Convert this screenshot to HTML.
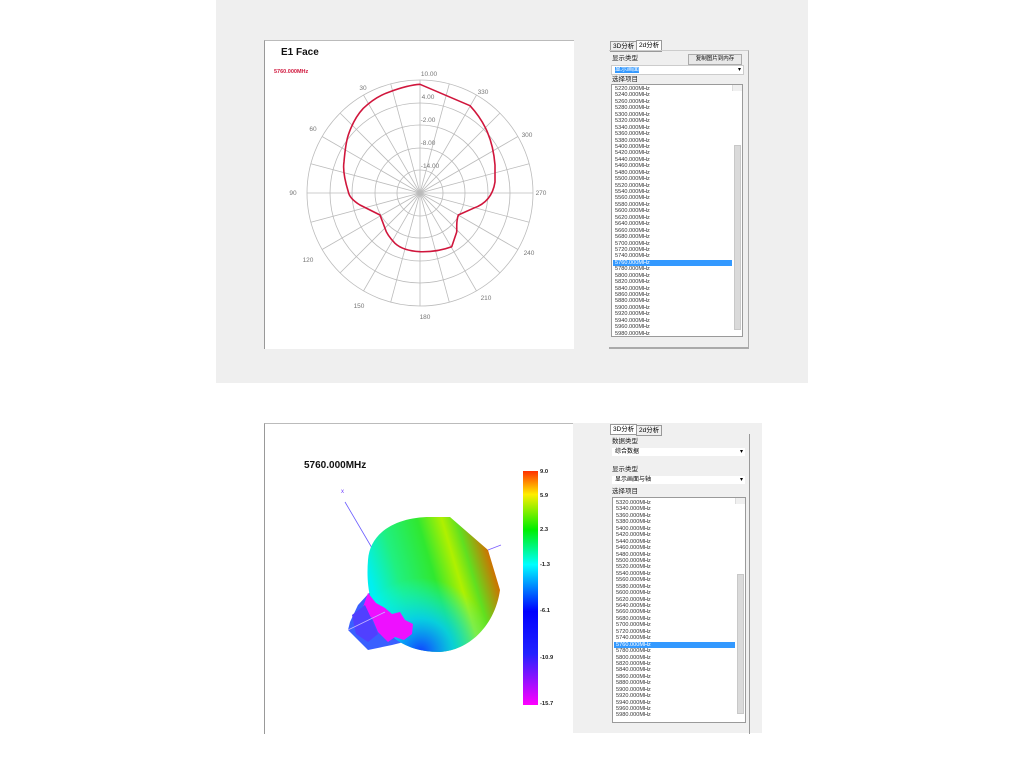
<!DOCTYPE html>
<html><head><meta charset="utf-8"><style>
body{margin:0;width:1024px;height:768px;background:#fff;position:relative;overflow:hidden;font-family:"Liberation Sans","Noto Sans CJK SC",sans-serif}
.a{position:absolute}
.list{position:absolute;background:#fff;border:1px solid #9a9a9a;font-size:5.6px;line-height:6.45px;color:#333;padding-left:3px;box-sizing:border-box;overflow:hidden}
.list div{height:6.45px;white-space:nowrap}
.sel{background:#3399ff;color:#fff;margin-left:-2px;padding-left:2px;margin-right:10px}
.sb{position:absolute;right:0;top:0;bottom:0;width:9px;background:#f0f0f0;border-left:1px solid #ddd}
.thumb{position:absolute;right:1px;width:7px;background:#dadada;border:1px solid #c8c8c8;box-sizing:border-box}
.lbl{font-size:6.5px;line-height:7px;color:#222;position:absolute}
.tab{position:absolute;font-size:6.5px;line-height:9px;border:1px solid #999;background:#fff;padding:0 2px;height:9px}
.combo{position:absolute;background:#fff;border:1px solid #ccc;font-size:6px;height:8px;line-height:8px;padding-left:3px;box-sizing:content-box}
.combo:after{content:"▾";position:absolute;right:2px;top:0;font-size:6px}
</style></head><body>
<div class="a" style="left:216px;top:0;width:592px;height:383px;background:#efefef"></div>
<div class="a" style="left:264px;top:40px;width:309px;height:308px;background:#fff;border-left:1px solid #999;border-top:1px solid #bbb"></div>
<svg class="a" style="left:0;top:0" width="1024" height="768">
<g fill="none" stroke="#bbb" stroke-width="0.8">
<circle cx="420" cy="193" r="113"/><circle cx="420" cy="193" r="90"/><circle cx="420" cy="193" r="68"/><circle cx="420" cy="193" r="45"/><circle cx="420" cy="193" r="23"/>
<line x1="533" y1="193" x2="307" y2="193"/><line x1="529.2" y1="163.7" x2="310.8" y2="222.3"/><line x1="517.9" y1="136.5" x2="322.1" y2="249.5"/><line x1="499.9" y1="113.1" x2="340.1" y2="272.9"/><line x1="476.5" y1="95.1" x2="363.5" y2="290.9"/><line x1="449.3" y1="83.8" x2="390.7" y2="302.2"/><line x1="420" y1="80" x2="420" y2="306"/><line x1="390.7" y1="83.8" x2="449.3" y2="302.2"/><line x1="363.5" y1="95.1" x2="476.5" y2="290.9"/><line x1="340.1" y1="113.1" x2="499.9" y2="272.9"/><line x1="322.1" y1="136.5" x2="517.9" y2="249.5"/><line x1="310.8" y1="163.7" x2="529.2" y2="222.3"/>
</g>
<path fill="none" stroke="#d0163c" stroke-width="1.6" stroke-linejoin="round" d="M420,84.3 L470,105.7 C485,122 493,140 495,165 L495,182 C493,195 486,204 473.3,208.3 L458.3,215 C456,222 457,225 456.7,232 L451.7,246.7 C440,251 430,252 420,251.7 C408,251 400,248 395,243.3 C388,236 386,232 385,228.3 L380,215 C372,211 366,208 360,205 C352,200 349,196 348.3,191.7 C344,178 343,168 344,161.7 C345,150 346,142 348.3,135 C352,124 357,115 363.3,108.3 C372,100 380,95 390,91.7 C400,88 410,85 420,84.3 Z"/>
<g font-family="Liberation Sans" font-size="6.5" fill="#777" text-anchor="middle">
<text x="429" y="76">10.00</text><text x="428" y="99">4.00</text><text x="428" y="122">-2.00</text><text x="428" y="145">-8.00</text><text x="430" y="168">-14.00</text>
<text x="363" y="90">30</text><text x="483" y="94">330</text><text x="313" y="131">60</text><text x="527" y="137">300</text><text x="293" y="195">90</text><text x="541" y="195">270</text><text x="308" y="262">120</text><text x="529" y="255">240</text><text x="359" y="308">150</text><text x="486" y="300">210</text><text x="425" y="319">180</text>
</g>
<text x="281" y="55" font-family="Liberation Sans" font-weight="bold" font-size="10" fill="#111">E1 Face</text>
<text x="274" y="73" font-family="Liberation Sans" font-weight="bold" font-size="5.5" fill="#d0163c">5760.000MHz</text>
</svg>
<div class="tab" style="left:610px;top:41px;background:#efefef">3D分析</div>
<div class="tab" style="left:636px;top:40px;height:10px">2d分析</div>
<div class="a" style="left:609px;top:50px;width:139px;height:296px;border-right:1px solid #aaa;border-bottom:2px solid #aaa;border-top:1px solid #ccc"></div>
<div class="lbl" style="left:612px;top:55px">显示类型</div>
<div class="a" style="left:688px;top:54px;width:52px;height:9px;border:1px solid #aaa;background:#e8e8e8;font-size:5.5px;text-align:center;line-height:9px">复制图片到内存</div>
<div class="combo" style="left:611px;top:65px;width:128px"><span style="background:#3399ff;color:#fff">显示画面</span></div>
<div class="lbl" style="left:612px;top:76px">选择项目</div>
<div class="list" style="left:611px;top:84px;width:132px;height:253px;padding-top:1px">
<div>5220.000MHz</div><div>5240.000MHz</div><div>5260.000MHz</div><div>5280.000MHz</div><div>5300.000MHz</div><div>5320.000MHz</div><div>5340.000MHz</div><div>5360.000MHz</div><div>5380.000MHz</div><div>5400.000MHz</div><div>5420.000MHz</div><div>5440.000MHz</div><div>5460.000MHz</div><div>5480.000MHz</div><div>5500.000MHz</div><div>5520.000MHz</div><div>5540.000MHz</div><div>5560.000MHz</div><div>5580.000MHz</div><div>5600.000MHz</div><div>5620.000MHz</div><div>5640.000MHz</div><div>5660.000MHz</div><div>5680.000MHz</div><div>5700.000MHz</div><div>5720.000MHz</div><div>5740.000MHz</div><div class="sel">5760.000MHz</div><div>5780.000MHz</div><div>5800.000MHz</div><div>5820.000MHz</div><div>5840.000MHz</div><div>5860.000MHz</div><div>5880.000MHz</div><div>5900.000MHz</div><div>5920.000MHz</div><div>5940.000MHz</div><div>5960.000MHz</div><div>5980.000MHz</div>
<div class="sb"><div class="thumb" style="top:60px;height:185px"></div></div>
</div>
<div class="a" style="left:264px;top:423px;width:309px;height:310px;background:#fff;border-left:1px solid #999;border-top:1px solid #bbb"></div>
<div class="a" style="left:573px;top:423px;width:189px;height:310px;background:#f0f0f0"></div>
<svg class="a" style="left:0;top:0" width="1024" height="768">
<defs>
<linearGradient id="cb" x1="0" y1="0" x2="0" y2="1">
<stop offset="0" stop-color="#ff3000"/><stop offset="0.1" stop-color="#ffee00"/><stop offset="0.25" stop-color="#00ee00"/><stop offset="0.4" stop-color="#00ffff"/><stop offset="0.6" stop-color="#0000ff"/><stop offset="0.78" stop-color="#2222ff"/><stop offset="1" stop-color="#ff00ff"/>
</linearGradient>
<linearGradient id="bl" x1="0" y1="0.4" x2="1" y2="0.1">
<stop offset="0" stop-color="#00f0f0"/><stop offset="0.2" stop-color="#20f080"/><stop offset="0.45" stop-color="#30e830"/><stop offset="0.62" stop-color="#b0f000"/><stop offset="0.72" stop-color="#60e020"/><stop offset="0.88" stop-color="#d07000"/><stop offset="1" stop-color="#ff3000"/>
</linearGradient>
<radialGradient id="bb" cx="0.4" cy="1.0" r="0.55">
<stop offset="0" stop-color="#1040ff"/><stop offset="0.45" stop-color="#00c8ff" stop-opacity="0.8"/><stop offset="1" stop-color="#00ffff" stop-opacity="0"/>
</radialGradient>
</defs>
<line x1="345" y1="502" x2="372" y2="548" stroke="#6a5cff" stroke-width="0.8"/>
<text x="341" y="493" font-size="6" fill="#7040ff" font-family="Liberation Sans">x</text>
<polygon points="370,592 358,605 350,622 348,630 368,650 392,645 412,640 410,612 392,600" fill="#3a60ff"/>
<path d="M368,560 C370,530 400,517 430,517 L450,517 L488,550 L500,590 C495,625 470,650 440,652 C410,652 390,640 380,620 C370,605 366,585 368,560 Z" fill="url(#bl)"/>
<path d="M368,560 C370,530 400,517 430,517 L450,517 L488,550 L500,590 C495,625 470,650 440,652 C410,652 390,640 380,620 C370,605 366,585 368,560 Z" fill="url(#bb)"/>
<polygon points="368,593 376,603 385,608 392,614 400,612 405,620 413,624 412,634 404,640 395,637 388,642 378,632 372,618 362,610" fill="#ee10ff"/>
<polygon points="352,615 365,605 372,620 378,634 368,642 356,634" fill="#5040ff"/>
<line x1="488" y1="550" x2="501" y2="545" stroke="#7a5cff" stroke-width="0.8"/>
<line x1="348" y1="630" x2="385" y2="612" stroke="#c8b8ff" stroke-width="0.8"/>
<rect x="523" y="471" width="15" height="234" fill="url(#cb)"/>
<g font-family="Liberation Sans" font-size="5.8" fill="#222" font-weight="bold">
<text x="540" y="473">9.0</text><text x="540" y="497">5.9</text><text x="540" y="531">2.3</text><text x="540" y="566">-1.3</text><text x="540" y="612">-6.1</text><text x="540" y="659">-10.9</text><text x="540" y="705">-15.7</text>
</g>
<text x="304" y="468" font-family="Liberation Sans" font-weight="bold" font-size="10" fill="#111">5760.000MHz</text>
</svg>
<div class="tab" style="left:610px;top:424px">3D分析</div>
<div class="tab" style="left:636px;top:425px;background:#efefef">2d分析</div>
<div class="a" style="left:609px;top:434px;width:140px;height:300px;border-right:1px solid #999"></div>
<div class="lbl" style="left:612px;top:438px">数据类型</div>
<div class="combo" style="left:612px;top:448px;width:130px;border:none">综合数据</div>
<div class="lbl" style="left:612px;top:466px">显示类型</div>
<div class="combo" style="left:612px;top:476px;width:130px;border:none">显示画面与轴</div>
<div class="lbl" style="left:612px;top:488px">选择项目</div>
<div class="list" style="left:612px;top:497px;width:134px;height:226px;padding-top:2px">
<div>5320.000MHz</div><div>5340.000MHz</div><div>5360.000MHz</div><div>5380.000MHz</div><div>5400.000MHz</div><div>5420.000MHz</div><div>5440.000MHz</div><div>5460.000MHz</div><div>5480.000MHz</div><div>5500.000MHz</div><div>5520.000MHz</div><div>5540.000MHz</div><div>5560.000MHz</div><div>5580.000MHz</div><div>5600.000MHz</div><div>5620.000MHz</div><div>5640.000MHz</div><div>5660.000MHz</div><div>5680.000MHz</div><div>5700.000MHz</div><div>5720.000MHz</div><div>5740.000MHz</div><div class="sel">5760.000MHz</div><div>5780.000MHz</div><div>5800.000MHz</div><div>5820.000MHz</div><div>5840.000MHz</div><div>5860.000MHz</div><div>5880.000MHz</div><div>5900.000MHz</div><div>5920.000MHz</div><div>5940.000MHz</div><div>5960.000MHz</div><div>5980.000MHz</div>
<div class="sb"><div class="thumb" style="top:76px;height:140px"></div></div>
</div>
</body></html>
